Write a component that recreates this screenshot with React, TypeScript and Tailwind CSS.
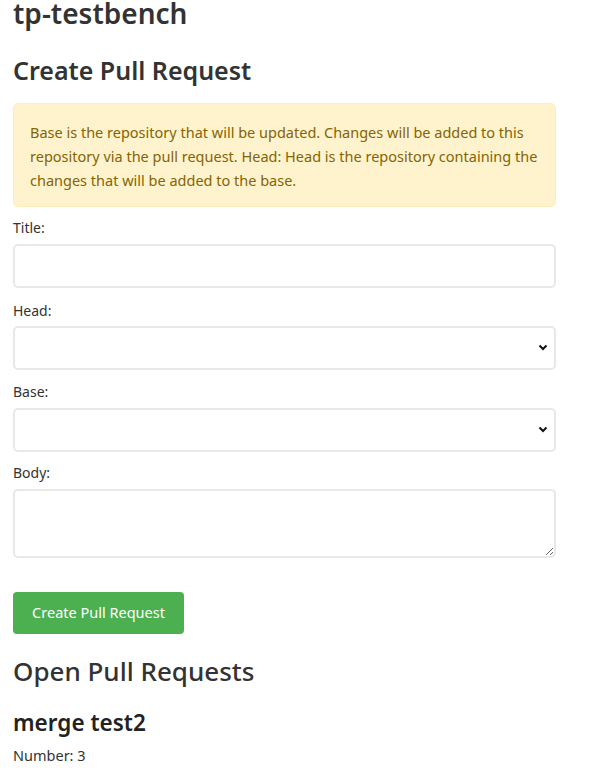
import React from "react";

export default function App() {
  const font = { fontFamily: '"Noto Sans", "Open Sans", sans-serif' };
  return (
    <div className="bg-white min-h-[771px] text-[#333333]" style={font}>
      <div className="w-[543px] ml-[13px]">
        <h1 className="text-[28px] font-semibold leading-[34px] -mt-[4px] text-[#333333]">tp-testbench</h1>
        <h2 className="text-[25px] font-semibold leading-[32px] mt-[24px] text-[#333333]">Create Pull Request</h2>
        <div className="mt-[17px] bg-[#fff3cd] border border-[#ffeeba] rounded-[5px] px-[16px] pt-[16px] pb-[14px] text-[#856404] text-[14.5px] leading-[24px]">
          Base is the repository that will be updated. Changes will be added to this repository via the pull request. Head: Head is the repository containing the changes that will be added to the base.
        </div>
        <form className="flex flex-col">
          <label className="mt-[11px] text-[14px] leading-[20px]">Title:</label>
          <input type="text" className="mt-[6px] h-[44px] border-2 border-[#e8e8e8] rounded-[5px] bg-white" />
          <label className="mt-[13px] text-[14px] leading-[20px]">Head:</label>
          <div className="relative mt-[5px] h-[44px]">
            <select className="block w-full h-[44px] border-2 border-[#e8e8e8] rounded-[5px] bg-white appearance-none" />
            <svg className="absolute right-[8px] top-[18px] pointer-events-none" width="10" height="7" viewBox="0 0 10 7">
              <path d="M1.5 1.5 L5 5 L8.5 1.5" stroke="#111" strokeWidth="2" fill="none" />
            </svg>
          </div>
          <label className="mt-[12px] text-[14px] leading-[20px]">Base:</label>
          <div className="relative mt-[6px] h-[44px]">
            <select className="block w-full h-[44px] border-2 border-[#e8e8e8] rounded-[5px] bg-white appearance-none" />
            <svg className="absolute right-[8px] top-[18px] pointer-events-none" width="10" height="7" viewBox="0 0 10 7">
              <path d="M1.5 1.5 L5 5 L8.5 1.5" stroke="#111" strokeWidth="2" fill="none" />
            </svg>
          </div>
          <label className="mt-[11px] text-[14px] leading-[20px]">Body:</label>
          <textarea className="mt-[6px] h-[69px] border-2 border-[#e8e8e8] rounded-[5px] bg-white resize-y" />
          <div>
            <button type="button" className="mt-[34px] w-[171px] h-[42px] bg-[#4caf50] text-white rounded-[4px] text-[14.5px]">
              Create Pull Request
            </button>
          </div>
        </form>
        <h2 className="text-[26px] font-medium leading-[32px] mt-[21px] text-[#333333]">Open Pull Requests</h2>
        <h3 className="text-[22.5px] font-semibold leading-[28px] mt-[22px] text-[#222222]">merge test2</h3>
        <p className="text-[14.5px] leading-[20px] mt-[8px]">Number: 3</p>
      </div>
    </div>
  );
}
